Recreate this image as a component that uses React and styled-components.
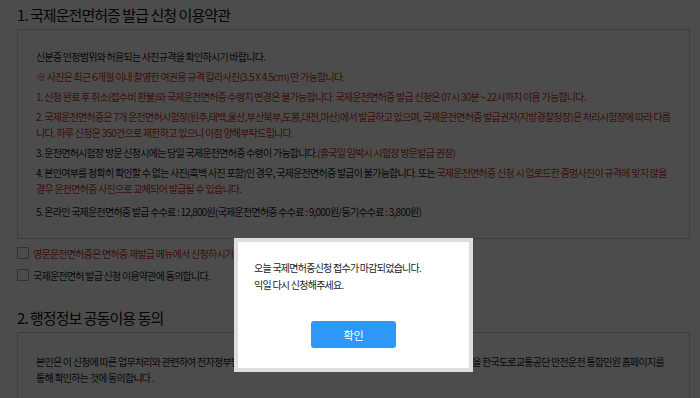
import React from 'react';
import styled, { createGlobalStyle } from 'styled-components';

const GlobalStyle = createGlobalStyle`
  html, body {
    margin: 0;
    padding: 0;
    background: #fff;
  }
  body {
    font-family: "Noto Sans CJK KR", "Noto Sans", sans-serif;
    color: #222;
    overflow: hidden;
  }
`;

const Page = styled.div`
  width: 700px;
  height: 398px;
  box-sizing: border-box;
  padding: 5px 10px 0 17px;
  overflow: hidden;
`;

const SectionTitle = styled.h2`
  margin: ${(p) => p.$top || 0}px 0 4px;
  font-size: 15px;
  line-height: 20px;
  font-weight: 400;
  letter-spacing: -0.95px;
  color: #111;
`;

const TermsBox = styled.div`
  border: 1px solid #ccc;
  padding: ${(p) => p.$padTop || 19}px 15px 14px 18px;
`;

const Para = styled.p`
  margin: ${(p) => p.$top || 0}px 0 4px;
  font-size: 10px;
  line-height: 16px;
  letter-spacing: -0.75px;
  white-space: nowrap;
  color: ${(p) => (p.$red ? '#c4361f' : '#222')};
`;

const Red = styled.span`
  color: #c4361f;
`;

const CheckList = styled.div`
  display: flex;
  flex-direction: column;
  gap: 6px;
  margin-top: 6px;
`;

const CheckRow = styled.label`
  display: flex;
  align-items: center;
  gap: 4px;
  height: 16px;
  font-size: 10px;
  letter-spacing: -0.75px;
  white-space: nowrap;
  color: ${(p) => (p.$red ? '#c4361f' : '#222')};
`;

const CheckBox = styled.span`
  width: 12px;
  height: 12px;
  box-sizing: border-box;
  border: 1px solid #aaa;
  background: #fff;
  flex: none;
`;

const Overlay = styled.div`
  position: fixed;
  inset: 0;
  background: rgba(0, 0, 0, 0.7);
`;

const Modal = styled.div`
  position: fixed;
  top: 238px;
  left: 234px;
  width: 239px;
  height: 134px;
  box-sizing: border-box;
  border: 4px solid #dedede;
  background: #fff;
  padding: 17px 16px 0;
  display: flex;
  flex-direction: column;
`;

const ModalText = styled.p`
  margin: 0;
  font-size: 10px;
  line-height: 17px;
  letter-spacing: -0.75px;
  color: #222;
`;

const ConfirmButton = styled.button`
  align-self: center;
  margin-top: 28px;
  width: 85px;
  height: 27px;
  border: none;
  border-radius: 3px;
  background: #2d98f8;
  color: #fff;
  font-family: inherit;
  font-size: 11px;
  cursor: pointer;
`;

export default function App() {
  return (
    <>
      <GlobalStyle />
      <Page>
        <SectionTitle>1. 국제운전면허증 발급 신청 이용약관</SectionTitle>
        <TermsBox>
          <Para>신분증 인정범위와 허용되는 사진규격을 확인하시기 바랍니다.</Para>
          <Para $red>※ 사진은 최근 6개월 이내 촬영한 여권용 규격 칼라사진(3.5 X 4.5cm) 만 가능합니다.</Para>
          <Para $red>
            1. 신청 완료 후 취소(접수비 환불)와 국제운전면허증 수령지 변경은 불가능합니다. 국제운전면허증 발급 신청은 07시 30분 ~ 22시까지 이용 가능합니다.
          </Para>
          <Para $red>
            2. 국제운전면허증은 7개 운전면허시험장(원주,태백,울산,부산북부,도봉,대전,마산)에서 발급하고 있으며, 국제운전면허증 발급권자(지방경찰청장)은 처리시험장에 따라 다릅
            <br />
            니다. 하루 신청은 350건으로 제한하고 있으니 이점 양해부탁드립니다.
          </Para>
          <Para>
            3. 운전면허시험장 방문 신청시에는 당일 국제운전면허증 수령이 가능합니다.<Red>(출국일 임박시 시험장 방문발급 권장)</Red>
          </Para>
          <Para>
            4. 본인여부를 정확히 확인할 수 없는 사진(흑백 사진 포함)인 경우, 국제운전면허증 발급이 불가능합니다. 또는{' '}
            <Red>국제운전면허증 신청 시 업로드한 증명사진이 규격에 맞지 않을</Red>
            <br />
            <Red>경우 운전면허증 사진으로 교체되어 발급될 수 있습니다.</Red>
          </Para>
          <Para $top={7}>
            5. 온라인 국제운전면허증 발급 수수료 : 12,800원(국제운전면허증 수수료 : 9,000원/등기수수료 : 3,800원)
          </Para>
        </TermsBox>

        <CheckList>
          <CheckRow $red>
            <CheckBox />
            영문운전면허증은 면허증 재발급 메뉴에서 신청하시기 바랍니다.
          </CheckRow>
          <CheckRow>
            <CheckBox />
            국제운전면허 발급 신청 이용약관에 동의합니다.
          </CheckRow>
        </CheckList>

        <SectionTitle $top={25}>2. 행정정보 공동이용 동의</SectionTitle>
        <TermsBox $padTop={21}>
          <Para>
            본인은 이 신청에 따른 업무처리와 관련하여 전자정부법 제36조에 따른 행정정보 공동이용을 통해 본인의 운전면허 내역을 한국도로교통공단 안전운전 통합민원 홈페이지를
            <br />
            통해 확인하는 것에 동의합니다 .
          </Para>
        </TermsBox>
      </Page>

      <Overlay />
      <Modal role="dialog">
        <ModalText>
          오늘 국제면허증신청 접수가 마감되었습니다.
          <br />
          익일 다시 신청해주세요.
        </ModalText>
        <ConfirmButton>확인</ConfirmButton>
      </Modal>
    </>
  );
}
